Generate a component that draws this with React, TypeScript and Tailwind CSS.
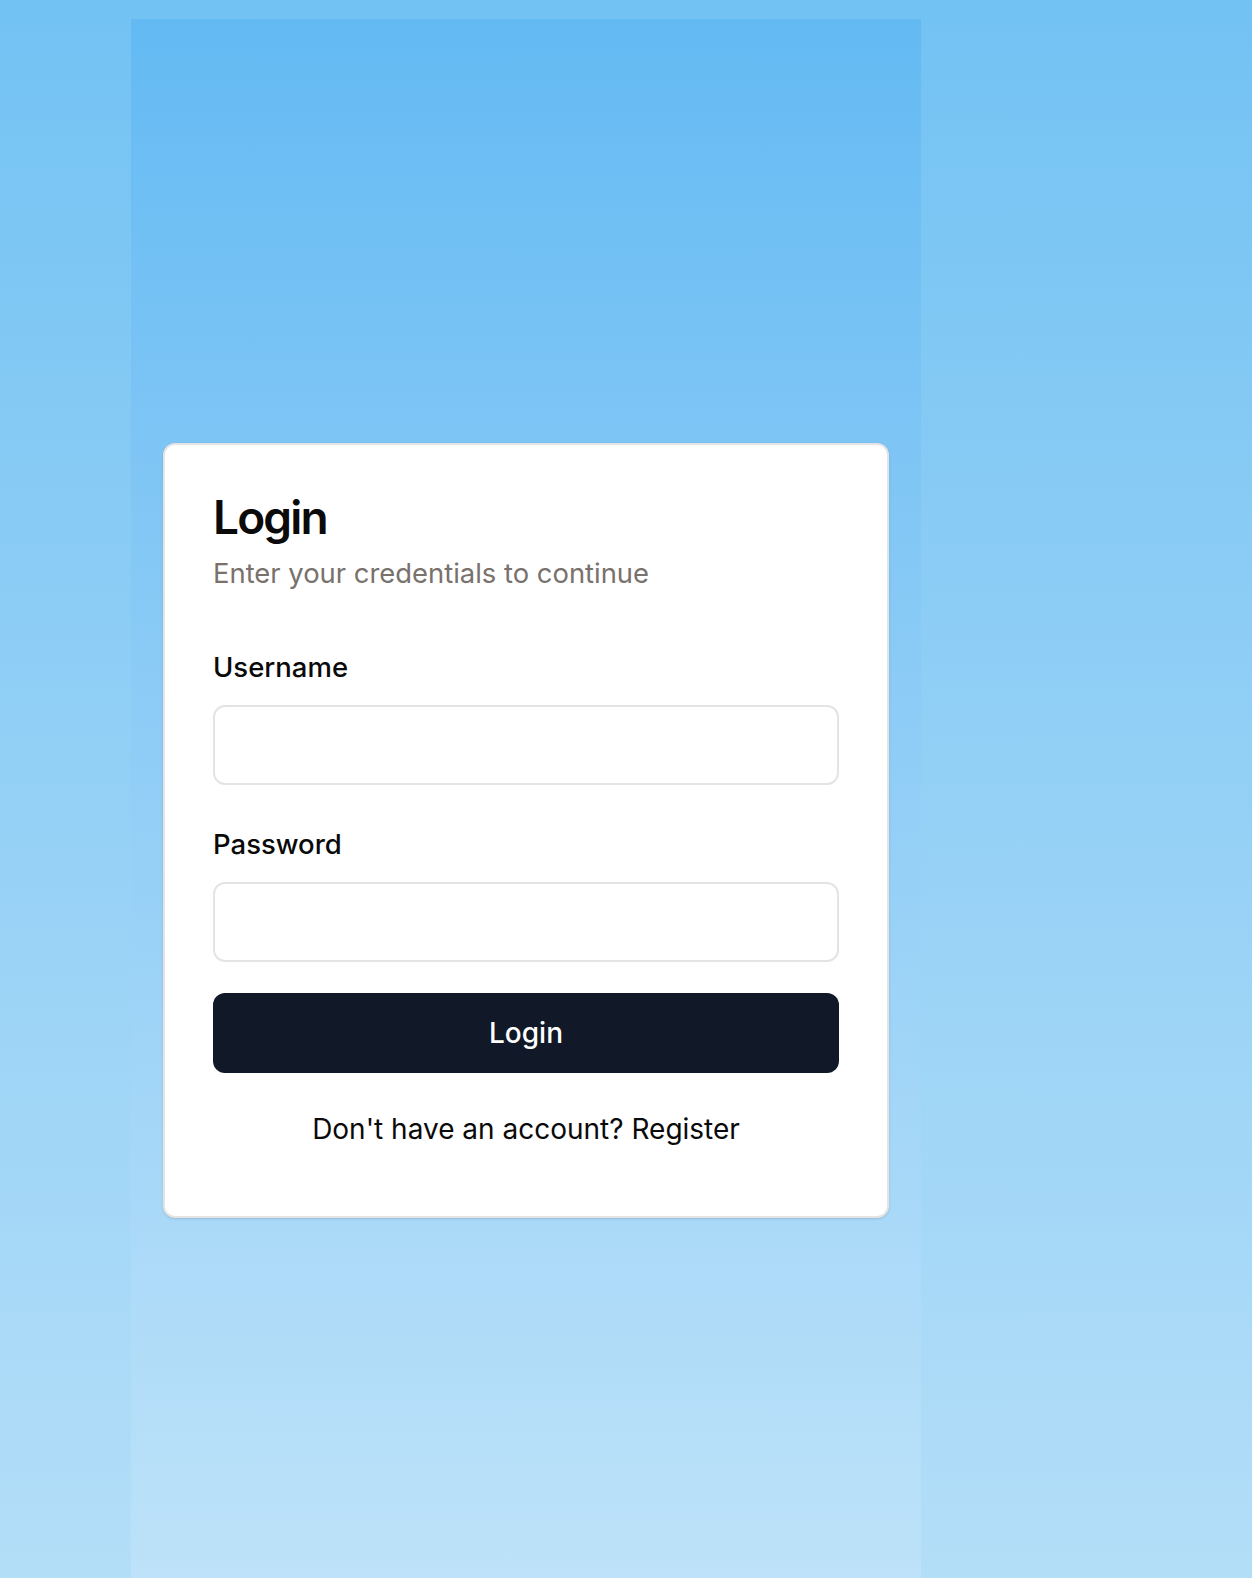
import React from "react";

export default function App() {
  return (
    <div
      className="h-[1578px] w-full overflow-hidden bg-linear-to-b from-[#72c2f3] to-[#b3def8] pt-[19px]"
      style={{ fontFamily: "Inter, 'Noto Sans', sans-serif" }}
    >
      <div className="ml-[131px] h-[1559px] w-[790px] bg-linear-to-b from-[#63baf3] to-[#bde2f9] px-8 pt-[424px]">
        <div className="rounded-[12px] border-2 border-[#e4e4e4] bg-white px-[48px] pt-[48px] pb-[67px] shadow-sm">
          <h1 className="text-[46px] font-semibold leading-[48px] tracking-[-0.04em] text-[#0a0a0a]">
            Login
          </h1>
          <p className="mt-3 text-[27.4px] leading-[40px] text-[#78716c]">
            Enter your credentials to continue
          </p>
          <label className="mt-[54px] block text-[27.5px] font-medium leading-[40px] text-[#0a0a0a]">
            Username
          </label>
          <input
            type="text"
            className="mt-[18px] block h-[80px] w-full rounded-[12px] border-2 border-[#e4e4e4] bg-white px-6 text-[28px] outline-none"
          />
          <label className="mt-[39px] block text-[27.5px] font-medium leading-[40px] text-[#0a0a0a]">
            Password
          </label>
          <input
            type="password"
            className="mt-[18px] block h-[80px] w-full rounded-[12px] border-2 border-[#e4e4e4] bg-white px-6 text-[28px] outline-none"
          />
          <button className="mt-[31px] flex h-[80px] w-full items-center justify-center rounded-[12px] bg-[#111827] text-[28px] font-medium text-white">
            Login
          </button>
          <p className="mt-[36px] text-center text-[28px] leading-[40px] text-[#0a0a0a]">
            Don't have an account? Register
          </p>
        </div>
      </div>
    </div>
  );
}
